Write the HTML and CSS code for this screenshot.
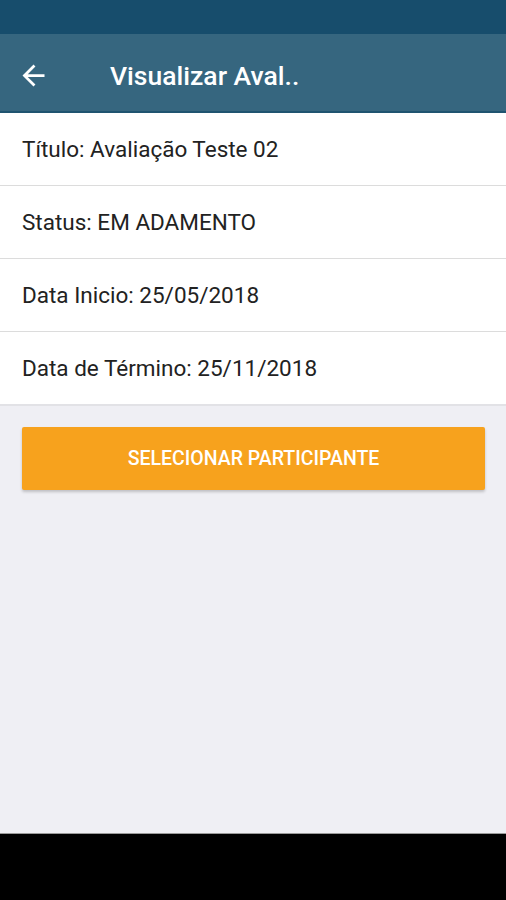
FILE: index.html
```html
<!DOCTYPE html>
<html lang="pt">
<head>
  <meta charset="UTF-8">
  <meta name="viewport" content="width=device-width, initial-scale=1.0">
  <title>Visualizar Avaliação</title>
  <link rel="stylesheet" href="styles.css">
</head>
<body>
  <div class="phone">
    <div class="status-bar"></div>
    <div class="toolbar">
      <svg class="back" width="24" height="24" viewBox="0 0 24 24">
        <path d="M20 11H7.83l5.59-5.59L12 4l-8 8 8 8 1.41-1.41L7.83 13H20v-2z" fill="#fff"/>
      </svg>
      <span class="title">Visualizar Aval..</span>
    </div>
    <div class="content">
      <div class="details">
        <div class="row">Título: Avaliação Teste 02</div>
        <div class="row">Status: EM ADAMENTO</div>
        <div class="row">Data Inicio: 25/05/2018</div>
        <div class="row">Data de Término: 25/11/2018</div>
      </div>
      <button class="btn">SELECIONAR PARTICIPANTE</button>
    </div>
    <div class="nav-bar"></div>
  </div>
</body>
</html>
```

FILE: styles.css
```css
body {
  margin: 0;
  font-family: Roboto, "Noto Sans", Arial, sans-serif;
  background-color: #000;
}
.phone {
  width: 506px;
  height: 900px;
  display: flex;
  flex-direction: column;
}
.status-bar {
  height: 34px;
  background: #174d6c;
}
.toolbar {
  height: 72px;
  padding-top: 5px;
  background: #36667f;
  border-bottom: 2px solid #1f5470;
  display: flex;
  align-items: center;
  padding-left: 17px;
  box-sizing: content-box;
}
.back {
  width: 33px;
  height: 33px;
}
.title {
  margin-left: 60px;
  color: #fff;
  font-size: 26.5px;
  font-weight: 500;
}
.content {
  flex: 1;
  background: #efeff4;
  border-bottom: 1px solid #9a9a9a;
}
.details {
  background: #fff;
  border-bottom: 2px solid #e2e2e6;
}
.row {
  height: 72px;
  display: flex;
  align-items: center;
  padding-left: 22px;
  font-size: 22.5px;
  color: #222;
  border-bottom: 1px solid #dcdcdc;
}
.row:last-child {
  border-bottom: none;
}
.btn {
  display: block;
  margin: 21px 21px 0 22px;
  width: 463px;
  height: 63px;
  border: none;
  border-radius: 2px;
  background: #f7a21d;
  color: #fff;
  font-family: inherit;
  font-size: 19.5px;
  font-weight: 500;
  box-shadow: 0 2px 3px rgba(0, 0, 0, 0.2);
}
.nav-bar {
  height: 66px;
  background: #000;
}
```
